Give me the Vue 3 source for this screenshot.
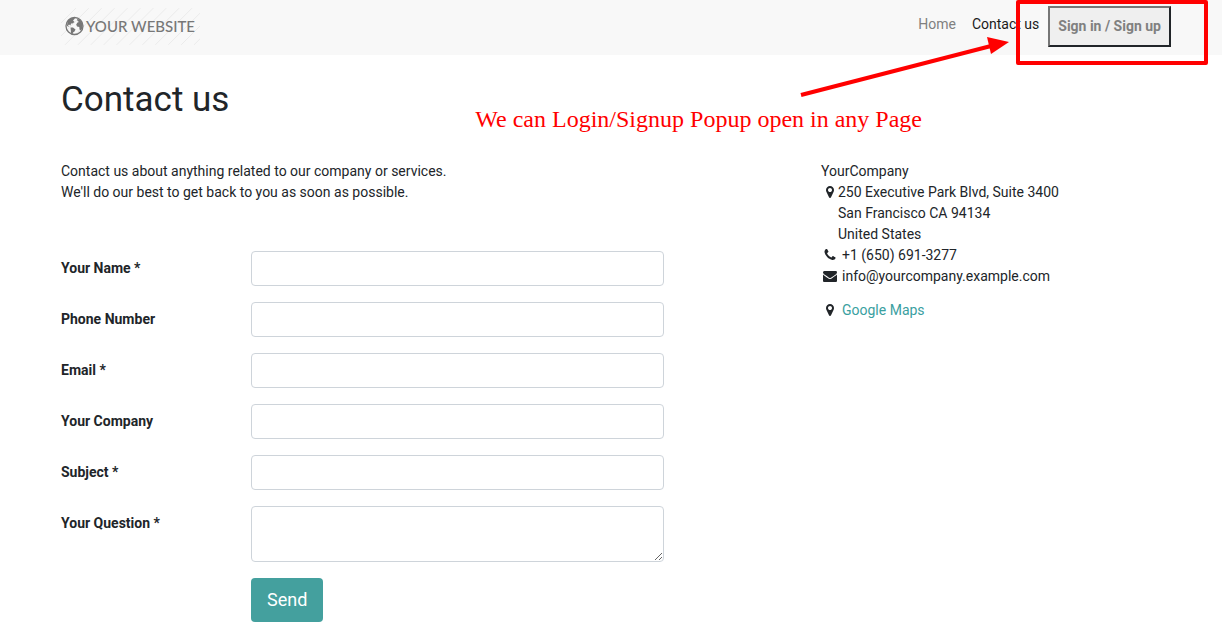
<script setup>
const fields = [
  { id: 'name', label: 'Your Name *', type: 'text' },
  { id: 'phone', label: 'Phone Number', type: 'tel' },
  { id: 'email', label: 'Email *', type: 'email' },
  { id: 'company', label: 'Your Company', type: 'text' },
  { id: 'subject', label: 'Subject *', type: 'text' },
]
const pin = 'M1152 640q0-106-75-181t-181-75-181 75-75 181 75 181 181 75 181-75 75-181zm256 0q0 109-33 179l-364 774q-16 33-47.500 52t-67.500 19-67.500-19-46.500-52l-365-774q-33-70-33-179 0-212 150-362t362-150 362 150 150 362z'
const phone = 'M1600 1240q0 27-10 70.500t-21 68.500q-21 50-122 106-94 51-186 51-27 0-53-3.500t-57.500-12.500-47-14.500-55.500-20.500-49-18q-98-35-175-83-127-79-264-216t-216-264q-48-77-83-175-3-9-18-49t-20.500-55.500-14.500-47-12.500-57.500-3.500-53q0-92 51-186 56-101 106-122 25-11 68.500-21t70.500-10q14 0 21 3 18 6 53 76 11 19 30 54t35 63.500 31 53.500q3 4 17.500 25t21.500 35.500 7 28.500q0 20-28.500 50t-62 55-62 53-28.500 46q0 9 5 22.500t8.500 20.500 14 24 11.500 19q76 137 174 235t235 174q2 1 19 11.500t24 14 20.500 8.500 22.500 5q18 0 46-28.500t53-62 55-62 50-28.500q14 0 28.500 7t35.500 21.500 25 17.500q25 15 53.500 31t63.500 35 54 30q70 35 76 53 3 7 3 21z'
const envelope = 'M1792 710v794q0 66-47 113t-113 47h-1472q-66 0-113-47t-47-113v-794q44 49 101 87 362 246 497 345 57 42 92.500 65.500t94.500 48 110 24.500h2q51 0 110-24.500t94.500-48 92.500-65.500q170-123 498-345 57-39 100-87zm0-294q0 79-49 151t-122 123q-376 261-468 325-10 7-42.500 31t-54 38.500-52 32.500-57.500 27-50 9h-2q-23 0-50-9t-57.500-27-52-32.500-54-38.500-42.500-31q-91-64-262-182.500t-205-142.500q-62-42-117-115.500t-55-136.500q0-78 41.500-130t118.500-52h1472q65 0 112.500 47t47.500 113z'
</script>

<template>
  <div class="page">
    <header class="navbar">
      <a class="logo" href="#" aria-label="Your Website">
        <svg class="hatch" viewBox="0 0 140 37" aria-hidden="true">
          <path d="M-22 37L15 0M-9 37L28 0M4 37L41 0M17 37L54 0M30 37L67 0M43 37L80 0M56 37L93 0M69 37L106 0M82 37L119 0M95 37L132 0M108 37L145 0M121 37L158 0M134 37L171 0" />
        </svg>
        <svg class="globe" viewBox="0 0 20 20" aria-hidden="true">
          <circle cx="10.500" cy="10" r="8.500" />
          <path d="M3.500 5L6 2.500L9.500 1.500L11 2.500L9 4.500L10.500 6L8.500 7.500L7 7.500L6.500 9.500L5 8.500L4 9.500L5.500 11L3 10Z M6.500 11.500L9 11.500L11.500 13.500L10.500 15.500L9 16.500L8.500 18.500L7 17.500L6.800 14.500Z M13 3L15.500 3.500L18 6.500L18.800 9.500L18 13L16.500 14.500L15.500 13.500L15.300 11L13 10.500L12.200 8.500L13.500 6.500L15 6L13.500 5Z" />
        </svg>
        <span>YOUR WEBSITE</span>
      </a>
      <nav class="menu">
        <a href="#">Home</a>
        <a href="#" class="active">Contact us</a>
        <button type="button" class="signin">Sign in / Sign up</button>
      </nav>
    </header>

    <main class="content">
      <h1>Contact us</h1>
      <div class="columns">
        <section class="main-column">
          <p class="intro">
            Contact us about anything related to our company or services.<br />
            We'll do our best to get back to you as soon as possible.
          </p>
          <form @submit.prevent>
            <div v-for="f in fields" :key="f.id" class="row">
              <label :for="f.id">{{ f.label }}</label>
              <input :id="f.id" :type="f.type" />
            </div>
            <div class="row">
              <label for="question">Your Question *</label>
              <textarea id="question"></textarea>
            </div>
            <div class="row">
              <button type="submit" class="send">Send</button>
            </div>
          </form>
        </section>

        <aside class="company">
          <div>YourCompany</div>
          <div class="address">
            <svg class="icon" viewBox="0 0 1792 1792" aria-hidden="true"><path :d="pin" /></svg>
            <div>
              250 Executive Park Blvd, Suite 3400<br />
              San Francisco CA 94134<br />
              United States
            </div>
          </div>
          <div class="contact">
            <svg class="icon" viewBox="0 0 1792 1792" aria-hidden="true"><path :d="phone" /></svg>
            <span>+1 (650) 691-3277</span>
          </div>
          <div class="contact">
            <svg class="icon" viewBox="0 0 1792 1792" aria-hidden="true"><path :d="envelope" /></svg>
            <span>info@yourcompany.example.com</span>
          </div>
          <div class="contact maps">
            <svg class="icon" viewBox="0 0 1792 1792" aria-hidden="true"><path :d="pin" /></svg>
            <a href="#">Google Maps</a>
          </div>
        </aside>
      </div>
    </main>

    <div class="callout-box"></div>
    <svg class="callout-arrow" viewBox="0 0 212 64" aria-hidden="true">
      <path class="shaft" d="M2 60L192 11" />
      <path d="M188 2L210 7L192 19Z" />
    </svg>
    <div class="callout-text">We can Login/Signup Popup open in any Page</div>
  </div>
</template>

<style>
body {
  margin: 0;
  background: #fff;
}
</style>

<style scoped>
.page {
  position: relative;
  color: #212529;
  font: 14px/21px Roboto, "Liberation Sans", sans-serif;
}
.page * {
  box-sizing: border-box;
}
a {
  text-decoration: none;
}
.navbar {
  display: flex;
  justify-content: space-between;
  align-items: flex-start;
  height: 55px;
  padding: 6px 51px 0 61px;
  background: #f8f8f8;
}
.logo {
  position: relative;
  display: flex;
  align-items: center;
  width: 139px;
  height: 40px;
  padding-left: 3px;
  color: #777;
  font: 500 15px/20px Lato, sans-serif;
  white-space: nowrap;
}
.hatch {
  position: absolute;
  inset: 2px 0 0 0;
  width: 139px;
  height: 37px;
  fill: none;
  stroke: #ebebeb;
  stroke-width: 1;
}
.globe {
  position: relative;
  flex: none;
  width: 20px;
  height: 20px;
  margin-right: 2px;
  fill: #777;
}
.globe circle {
  fill: none;
  stroke: #777;
  stroke-width: 1.300;
}
.logo span {
  position: relative;
}
.menu {
  display: flex;
  align-items: flex-start;
}
.menu a {
  padding: 8px;
  color: #808080;
}
.menu a.active {
  padding-right: 9px;
  color: #1a1a1a;
}
.signin {
  height: 41px;
  padding: 0 8px;
  border: 2px solid;
  border-color: #767676 #212529 #212529 #767676;
  border-radius: 0;
  background: #efefef;
  color: #808080;
  font: bold 14px/21px Roboto, "Liberation Sans", sans-serif;
}
.content {
  padding: 24px 51px 8px 61px;
}
h1 {
  margin: 0 0 40px;
  font-size: 35px;
  font-weight: 400;
  line-height: 42px;
}
.columns {
  display: grid;
  grid-template-columns: 73fr 35fr;
  gap: 30px;
}
.intro {
  margin: 0 0 48px;
}
form {
  display: grid;
  gap: 16px;
}
.row {
  display: grid;
  grid-template-columns: 160px minmax(0, 413px);
  column-gap: 30px;
  align-items: start;
}
label {
  padding-top: 7px;
  font-weight: 700;
}
input,
textarea {
  display: block;
  width: 100%;
  height: 35px;
  padding: 6px 12px;
  border: 1px solid #ced4da;
  border-radius: 4px;
  background: #fff;
  color: #495057;
  font: inherit;
}
textarea {
  height: 56px;
  resize: vertical;
}
.send {
  grid-column: 2;
  justify-self: start;
  padding: 8px 16px;
  border: 0;
  border-radius: 4px;
  background: #44a09e;
  color: #fff;
  font: 18px/28px Roboto, "Liberation Sans", sans-serif;
}
.icon {
  flex: none;
  width: 14px;
  height: 14px;
  margin: 3px 0 0 2px;
  fill: currentColor;
}
.address {
  display: flex;
  gap: 1px;
}
.contact {
  display: flex;
  gap: 5px;
}
.maps {
  margin-top: 13px;
}
.maps a {
  color: #3aa09f;
}
.callout-box {
  position: absolute;
  top: 0;
  right: 14px;
  width: 192px;
  height: 65px;
  border: 4px solid #f00;
  border-radius: 2px;
}
.callout-arrow {
  position: absolute;
  top: 35px;
  right: 211px;
  width: 212px;
  height: 64px;
  fill: #f00;
}
.shaft {
  stroke: #f00;
  stroke-width: 4;
}
.callout-text {
  position: absolute;
  top: 105px;
  right: 300px;
  color: #f00;
  font: 24px/28px "Liberation Serif", serif;
  white-space: nowrap;
}
</style>
